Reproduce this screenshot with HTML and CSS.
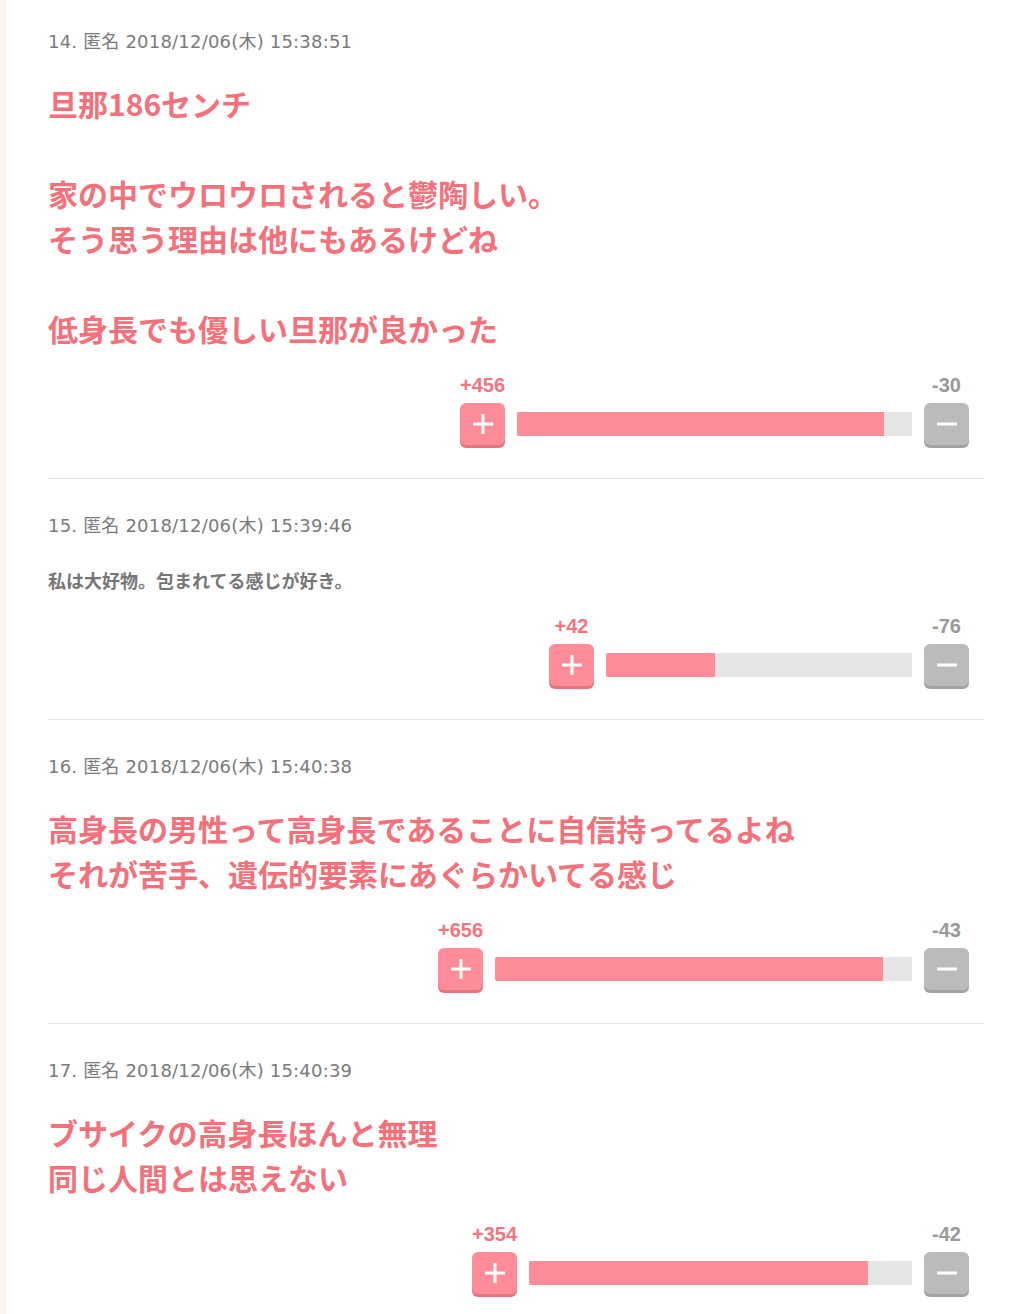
FILE: index.html
```html
<!DOCTYPE html>
<html lang="ja">
<head>
    <meta charset="UTF-8">
    <meta name="viewport" content="width=device-width, initial-scale=1.0">
    <title>コメント</title>
    <link rel="stylesheet" href="styles.css">
</head>
<body>

    <div class="page">
        <!-- 14 -->
        <div class="comment">
            <div class="meta">14. 匿名 2018/12/06(木) 15:38:51</div>
            <div class="body big">旦那186センチ<br><br>家の中でウロウロされると鬱陶しい。<br>そう思う理由は他にもあるけどね<br><br>低身長でも優しい旦那が良かった</div>
            <div class="vote">
                <div class="side plus">
                    <span class="count">+456</span>
                    <button class="btn btn-plus"><svg width="22" height="22" viewBox="0 0 22 22"><path d="M11 1v20M1 11h20" stroke="#fff" stroke-width="3"/></svg></button>
                </div>
                <div class="bar" style="width:395px"><div class="fill" style="width:92.9%"></div></div>
                <div class="side minus">
                    <span class="count">-30</span>
                    <button class="btn btn-minus"><svg width="22" height="22" viewBox="0 0 22 22"><path d="M1 11h20" stroke="#fff" stroke-width="3"/></svg></button>
                </div>
            </div>
        </div>

        <!-- 15 -->
        <div class="comment">
            <div class="meta">15. 匿名 2018/12/06(木) 15:39:46</div>
            <div class="body small">私は大好物。包まれてる感じが好き。</div>
            <div class="vote">
                <div class="side plus">
                    <span class="count">+42</span>
                    <button class="btn btn-plus"><svg width="22" height="22" viewBox="0 0 22 22"><path d="M11 1v20M1 11h20" stroke="#fff" stroke-width="3"/></svg></button>
                </div>
                <div class="bar" style="width:306px"><div class="fill" style="width:35.6%"></div></div>
                <div class="side minus">
                    <span class="count">-76</span>
                    <button class="btn btn-minus"><svg width="22" height="22" viewBox="0 0 22 22"><path d="M1 11h20" stroke="#fff" stroke-width="3"/></svg></button>
                </div>
            </div>
        </div>

        <!-- 16 -->
        <div class="comment">
            <div class="meta">16. 匿名 2018/12/06(木) 15:40:38</div>
            <div class="body big">高身長の男性って高身長であることに自信持ってるよね<br>それが苦手、遺伝的要素にあぐらかいてる感じ</div>
            <div class="vote">
                <div class="side plus">
                    <span class="count">+656</span>
                    <button class="btn btn-plus"><svg width="22" height="22" viewBox="0 0 22 22"><path d="M11 1v20M1 11h20" stroke="#fff" stroke-width="3"/></svg></button>
                </div>
                <div class="bar" style="width:417px"><div class="fill" style="width:93%"></div></div>
                <div class="side minus">
                    <span class="count">-43</span>
                    <button class="btn btn-minus"><svg width="22" height="22" viewBox="0 0 22 22"><path d="M1 11h20" stroke="#fff" stroke-width="3"/></svg></button>
                </div>
            </div>
        </div>

        <!-- 17 -->
        <div class="comment">
            <div class="meta">17. 匿名 2018/12/06(木) 15:40:39</div>
            <div class="body big">ブサイクの高身長ほんと無理<br>同じ人間とは思えない</div>
            <div class="vote">
                <div class="side plus">
                    <span class="count">+354</span>
                    <button class="btn btn-plus"><svg width="22" height="22" viewBox="0 0 22 22"><path d="M11 1v20M1 11h20" stroke="#fff" stroke-width="3"/></svg></button>
                </div>
                <div class="bar" style="width:383px"><div class="fill" style="width:88.5%"></div></div>
                <div class="side minus">
                    <span class="count">-42</span>
                    <button class="btn btn-minus"><svg width="22" height="22" viewBox="0 0 22 22"><path d="M1 11h20" stroke="#fff" stroke-width="3"/></svg></button>
                </div>
            </div>
        </div>
    </div>

</body>
</html>
```

FILE: styles.css
```css
body { margin: 0; background: #fff; font-family: "Noto Sans CJK JP", sans-serif; }
.page { border-left: 6px solid #fbf4eb; padding: 0 37px 0 42px; min-height: 1314px; box-sizing: border-box; }

.comment { padding: 33px 0 33px; border-bottom: 1px solid #e5e5e5; }
.comment:first-child { padding-top: 28px; }

.meta { font-family: "DejaVu Sans", "Noto Sans CJK JP", sans-serif; font-size: 18px; line-height: 27px; letter-spacing: 0.2px; color: #7a7a7a; margin-bottom: 28px; }

.body { font-weight: bold; }
.big { font-size: 30px; line-height: 45px; color: #f4707b; margin-top: -2px; padding-bottom: 2px; }
.small { font-size: 18px; line-height: 27px; color: #767676; }

.vote { display: flex; justify-content: flex-end; align-items: flex-end; padding-right: 15px; margin-top: 20px; }
.side { display: flex; flex-direction: column; align-items: center; width: 45px; }
.count { font-family: "Liberation Sans", Arial, sans-serif; font-weight: bold; font-size: 20px; line-height: 24px; margin-bottom: 6px; white-space: nowrap; }
.plus .count { color: #f37480; }
.minus .count { color: #999; }

.btn { width: 45px; height: 42px; border: none; border-radius: 6px; padding: 0; display: flex; align-items: center; justify-content: center; }
.btn-plus { background: #ff8c98; box-shadow: 0 3px 0 #e8737f; }
.btn-minus { background: #bbb; box-shadow: 0 3px 0 #a2a2a2; }

.bar { height: 24px; margin: 0 12px 9px; background: #e5e5e5; border-radius: 2px; overflow: hidden; }
.fill { height: 100%; background: #ff8c98; }
```
